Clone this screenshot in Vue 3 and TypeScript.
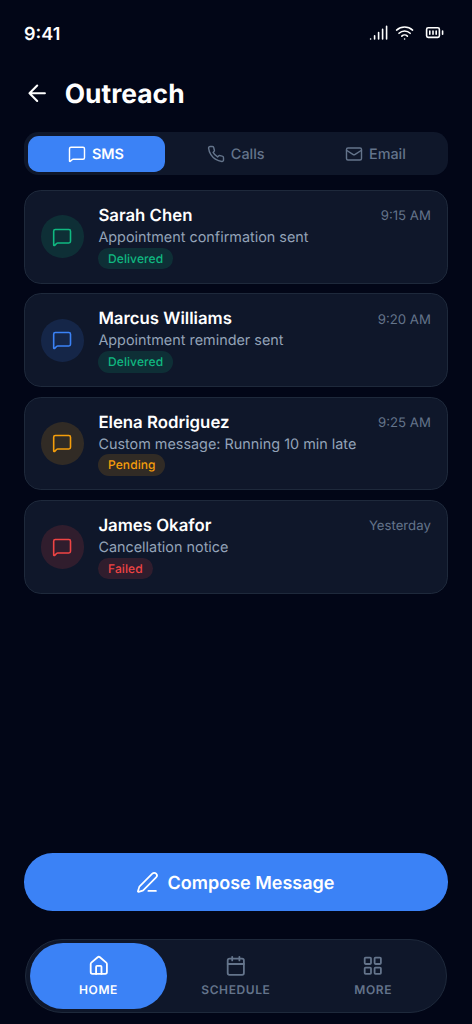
<script setup lang="ts">
import { ref } from 'vue'

type Tone = 'green' | 'blue' | 'amber' | 'red'
interface Message {
  name: string
  text: string
  time: string
  status: string
  icon: Tone
  badge: Tone
}

const messages: Message[] = [
  { name: 'Sarah Chen', text: 'Appointment confirmation sent', time: '9:15 AM', status: 'Delivered', icon: 'green', badge: 'green' },
  { name: 'Marcus Williams', text: 'Appointment reminder sent', time: '9:20 AM', status: 'Delivered', icon: 'blue', badge: 'green' },
  { name: 'Elena Rodriguez', text: 'Custom message: Running 10 min late', time: '9:25 AM', status: 'Pending', icon: 'amber', badge: 'amber' },
  { name: 'James Okafor', text: 'Cancellation notice', time: 'Yesterday', status: 'Failed', icon: 'red', badge: 'red' },
]

const bubble =
  'M22 17a2 2 0 0 1-2 2H6.828a2 2 0 0 0-1.414.586l-2.202 2.202A.71.71 0 0 1 2 21.286V5a2 2 0 0 1 2-2h16a2 2 0 0 1 2 2z'

const tabs = [
  { label: 'SMS', paths: [bubble] },
  {
    label: 'Calls',
    paths: [
      'M22 16.92v3a2 2 0 0 1-2.18 2 19.79 19.79 0 0 1-8.63-3.07 19.5 19.5 0 0 1-6-6 19.79 19.79 0 0 1-3.07-8.67A2 2 0 0 1 4.11 2h3a2 2 0 0 1 2 1.72 12.84 12.84 0 0 0 .7 2.81 2 2 0 0 1-.45 2.11L8.09 9.91a16 16 0 0 0 6 6l1.27-1.27a2 2 0 0 1 2.11-.45 12.84 12.84 0 0 0 2.81.7A2 2 0 0 1 22 16.92z',
    ],
  },
  {
    label: 'Email',
    paths: [
      'm22 7-8.991 5.727a2 2 0 0 1-2.009 0L2 7',
      'M4 4h16a2 2 0 0 1 2 2v12a2 2 0 0 1-2 2H4a2 2 0 0 1-2-2V6a2 2 0 0 1 2-2z',
    ],
  },
]

const navItems = [
  {
    label: 'HOME',
    paths: [
      'M15 21v-8a1 1 0 0 0-1-1h-4a1 1 0 0 0-1 1v8',
      'M3 10a2 2 0 0 1 .709-1.528l7-6a2 2 0 0 1 2.582 0l7 6A2 2 0 0 1 21 10v9a2 2 0 0 1-2 2H5a2 2 0 0 1-2-2z',
    ],
  },
  {
    label: 'SCHEDULE',
    paths: ['M8 2v4', 'M16 2v4', 'M5 4h14a2 2 0 0 1 2 2v14a2 2 0 0 1-2 2H5a2 2 0 0 1-2-2V6a2 2 0 0 1 2-2z', 'M3 10h18'],
  },
  {
    label: 'MORE',
    paths: ['M4 3h5a1 1 0 0 1 1 1v5a1 1 0 0 1-1 1H4a1 1 0 0 1-1-1V4a1 1 0 0 1 1-1z', 'M15 3h5a1 1 0 0 1 1 1v5a1 1 0 0 1-1 1h-5a1 1 0 0 1-1-1V4a1 1 0 0 1 1-1z', 'M15 14h5a1 1 0 0 1 1 1v5a1 1 0 0 1-1 1h-5a1 1 0 0 1-1-1v-5a1 1 0 0 1 1-1z', 'M4 14h5a1 1 0 0 1 1 1v5a1 1 0 0 1-1 1H4a1 1 0 0 1-1-1v-5a1 1 0 0 1 1-1z'],
  },
]

const activeTab = ref(0)
const activeNav = ref(0)
</script>

<template>
  <div class="screen">
    <div class="status">
      <span class="clock">9:41</span>
      <div class="indicators">
        <svg class="icon s-icon" viewBox="0 0 24 24"><path d="M2 20h.01M7 20v-4M12 20v-8M17 20V8M22 4v16" /></svg>
        <svg class="icon s-icon" viewBox="0 0 24 24"><path d="M12 20h.01M2 8.82a15 15 0 0 1 20 0M5 12.859a10 10 0 0 1 14 0M8.5 16.429a5 5 0 0 1 7 0" /></svg>
        <svg class="icon s-icon battery" viewBox="0 0 24 24"><path d="M10 10v4M14 10v4M22 14v-4M6 10v4" /><rect x="2" y="6" width="16" height="12" rx="2" /></svg>
      </div>
    </div>

    <header class="header">
      <svg class="icon back" viewBox="0 0 24 24"><path d="m12 19-7-7 7-7M19 12H5" /></svg>
      <h1>Outreach</h1>
    </header>

    <div class="tabs">
      <button v-for="(t, i) in tabs" :key="t.label" class="tab" :class="{ active: i === activeTab }" @click="activeTab = i">
        <svg class="icon tab-icon" viewBox="0 0 24 24"><path v-for="p in t.paths" :key="p" :d="p" /></svg>
        <span class="tab-label">{{ t.label }}</span>
      </button>
    </div>

    <main class="list">
      <article v-for="m in messages" :key="m.name" class="card">
        <div class="avatar" :class="m.icon">
          <svg class="icon bubble" viewBox="0 0 24 24"><path :d="bubble" /></svg>
        </div>
        <div class="body">
          <div class="row">
            <span class="name">{{ m.name }}</span>
            <span class="time">{{ m.time }}</span>
          </div>
          <div class="text">{{ m.text }}</div>
          <span class="badge" :class="m.badge">{{ m.status }}</span>
        </div>
      </article>
    </main>

    <button class="compose">
      <svg class="icon pen" viewBox="0 0 24 24"><path d="M13 21h8M21.174 6.812a1 1 0 0 0-3.986-3.987L3.842 16.174a2 2 0 0 0-.5.83l-1.321 4.352a.5.5 0 0 0 .623.622l4.353-1.32a2 2 0 0 0 .83-.497z" /></svg>
      <span class="compose-label">Compose Message</span>
    </button>

    <nav class="nav">
      <button v-for="(n, i) in navItems" :key="n.label" class="nav-item" :class="{ active: i === activeNav }" @click="activeNav = i">
        <svg class="icon nav-icon" viewBox="0 0 24 24"><path v-for="p in n.paths" :key="p" :d="p" /></svg>
        <span>{{ n.label }}</span>
      </button>
    </nav>
  </div>
</template>

<style>
body {
  margin: 0;
  background: #020617;
}
</style>

<style scoped>
.screen {
  box-sizing: border-box;
  width: 472px;
  height: 1024px;
  overflow: hidden;
  display: flex;
  flex-direction: column;
  padding: 0 24px 11px;
  background: #020617;
  color: #fff;
  font-family: Inter, sans-serif;
  text-rendering: geometricPrecision;
}
button {
  border: 0;
  margin: 0;
  padding: 0;
  background: none;
  font-family: inherit;
  text-rendering: inherit;
  color: inherit;
  display: flex;
  align-items: center;
  justify-content: center;
}
.icon {
  display: block;
  flex: none;
  fill: none;
  stroke: currentColor;
  stroke-width: 2;
  stroke-linecap: round;
  stroke-linejoin: round;
}
.status {
  height: 66px;
  display: flex;
  align-items: center;
  justify-content: space-between;
}
.clock {
  padding-top: 2px;
  font-size: 18px;
  font-weight: 600;
}
.indicators {
  display: flex;
  gap: 7.2px;
  padding-right: 3.8px;
}
.s-icon {
  width: 19.2px;
  height: 19.2px;
}
.battery {
  margin-left: 3.6px;
}
.header {
  height: 55px;
  display: flex;
  align-items: center;
  gap: 14.4px;
}
.back {
  width: 26.4px;
  height: 26.4px;
  stroke-width: 1.9;
}
h1 {
  margin: 0;
  font-size: 26.4px;
  font-weight: 700;
  line-height: 32px;
}
.tabs {
  box-sizing: border-box;
  margin-top: 11.2px;
  height: 43.2px;
  padding: 3.6px;
  display: flex;
  gap: 2.4px;
  border-radius: 14.4px;
  background: #0f172a;
}
.tab {
  flex: 1;
  gap: 6.2px;
  padding-right: 0.8px;
  border-radius: 10.8px;
  color: #64748b;
  font-size: 14.4px;
  font-weight: 500;
}
.tab-label {
  padding-top: 1.2px;
}
.tab.active {
  background: #3b82f6;
  color: #fff;
  font-weight: 600;
}
.tab-icon {
  width: 18px;
  height: 18px;
  stroke-width: 1.9;
}
.list {
  margin-top: 14.6px;
  flex: 1;
  display: flex;
  flex-direction: column;
  gap: 9.8px;
}
.card {
  box-sizing: border-box;
  height: 93.6px;
  padding: 13.3px 16.2px 13.3px 15.8px;
  border: 1px solid #1e293b;
  border-radius: 16.8px;
  background: #0f172a;
  display: flex;
  align-items: center;
  gap: 14.4px;
}
.avatar {
  width: 43.2px;
  height: 43.2px;
  flex: none;
  display: flex;
  align-items: center;
  justify-content: center;
  border-radius: 50%;
}
.bubble {
  width: 20.2px;
  height: 20.2px;
  stroke-width: 1.9;
}
.green {
  color: #10b981;
  background: rgba(16, 185, 129, 0.15);
}
.blue {
  color: #3b82f6;
  background: rgba(59, 130, 246, 0.15);
}
.amber {
  color: #f59e0b;
  background: rgba(245, 158, 11, 0.15);
}
.red {
  color: #ef4444;
  background: rgba(239, 68, 68, 0.15);
}
.body {
  flex: 1;
  padding-top: 0.8px;
  display: flex;
  flex-direction: column;
  align-items: flex-start;
}
.row {
  width: 100%;
  padding-top: 1px;
  display: flex;
  align-items: center;
  justify-content: space-between;
}
.name {
  font-size: 16.8px;
  font-weight: 600;
  line-height: 20.4px;
}
.time {
  font-size: 13.2px;
  line-height: 16px;
  color: #64748b;
}
.text {
  margin: 2.4px 0 1.4px;
  font-size: 14.4px;
  line-height: 17.4px;
  color: #94a3b8;
}
.badge {
  padding: 4px 9.8px 3.2px 9.6px;
  border-radius: 12px;
  font-size: 12px;
  font-weight: 500;
  letter-spacing: 0.1px;
  line-height: 14.4px;
}
.compose {
  height: 57.6px;
  flex: none;
  gap: 9.2px;
  padding-right: 2px;
  border-radius: 28.8px;
  background: #3b82f6;
  font-size: 18px;
  font-weight: 600;
}
.compose-label {
  padding-top: 1.6px;
}
.pen {
  width: 22.8px;
  height: 22.8px;
  stroke-width: 1.8;
}
.nav {
  box-sizing: border-box;
  flex: none;
  height: 74px;
  margin: 28px 1.2px 0;
  padding: 3.2px 3.8px;
  display: flex;
  border: 1px solid #1e293b;
  border-radius: 37px;
  background: #0f172a;
}
.nav-item {
  flex: 1;
  flex-direction: column;
  gap: 4.8px;
  padding-right: 0.3px;
  border-radius: 33px;
  color: #64748b;
  font-size: 12px;
  font-weight: 600;
  letter-spacing: 0.6px;
}
.nav-item.active {
  background: #3b82f6;
  color: #fff;
}
.nav-icon {
  width: 21.6px;
  height: 21.6px;
}
</style>
